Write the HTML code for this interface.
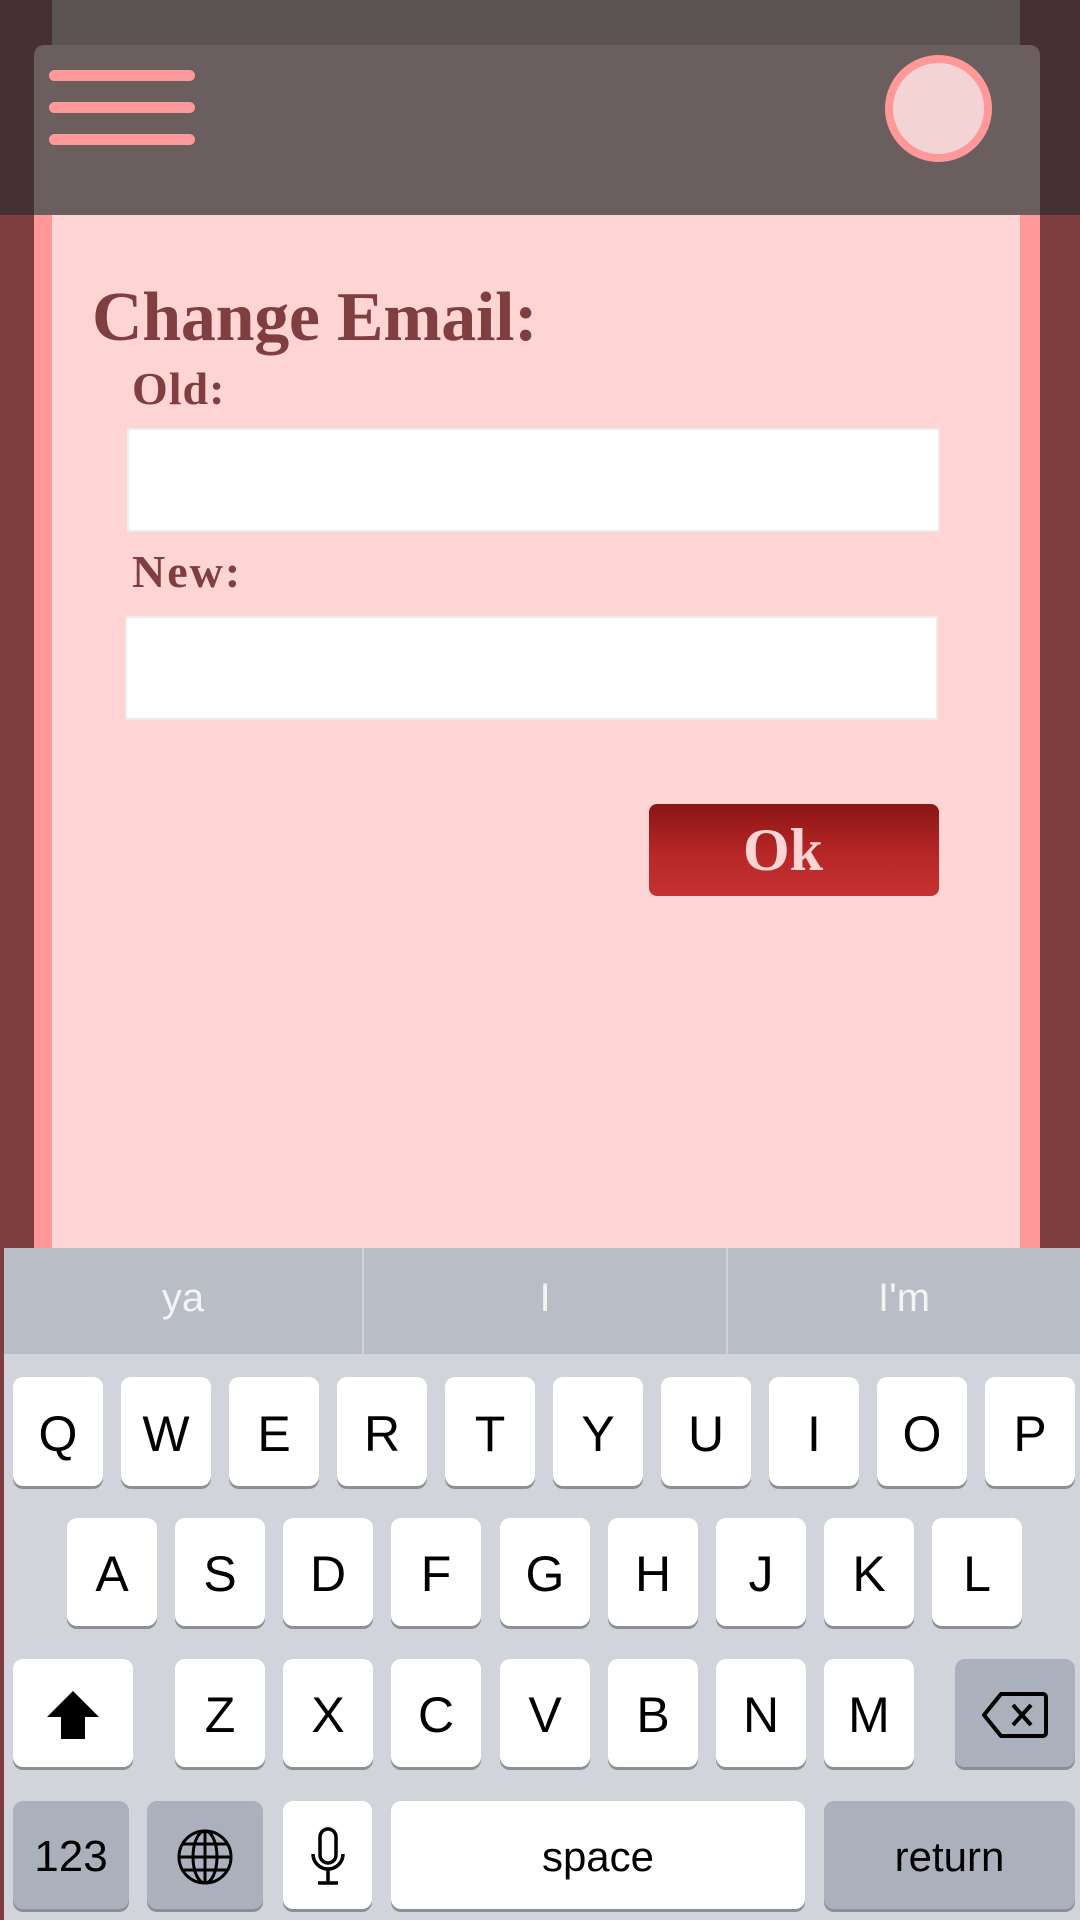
<!DOCTYPE html>
<html><head><meta charset="utf-8">
<style>
*{margin:0;padding:0;box-sizing:border-box}
html,body{width:1080px;height:1920px;overflow:hidden;background:#7d3e3f;position:relative;font-family:"Liberation Sans",sans-serif}
.abs{position:absolute}
.serif{font-family:"Liberation Serif",serif;font-weight:bold;color:#7f3f40}
.key{position:absolute;background:#fff;border-radius:10px;box-shadow:0 3px 0 #8c8f95;text-align:center;font-size:50px;color:#000;display:flex;align-items:center;justify-content:center;padding-top:4px}
.gk{background:#abb1bc}
</style></head><body>
<div class="abs" style="left:34px;top:0;width:1006px;height:1250px;background:#ff9999"></div>
<div class="abs" style="left:52px;top:0;width:968px;height:1250px;background:#ffd4d4"></div>
<div class="abs" style="left:0;top:0;width:1080px;height:215px;background:#463033"></div>
<div class="abs" style="left:52px;top:0;width:968px;height:215px;background:#5b5252"></div>
<div class="abs" style="left:34px;top:45px;width:1006px;height:170px;background:#6a5e5e;border-radius:10px 10px 0 0"></div>
<div class="abs" style="left:52px;top:45px;width:968px;height:170px;background:#6a5e5e"></div>
<div class="abs" style="left:49px;top:70px;width:146px;height:11px;border-radius:6px;background:#ff9999"></div>
<div class="abs" style="left:49px;top:102px;width:146px;height:11px;border-radius:6px;background:#ff9999"></div>
<div class="abs" style="left:49px;top:134px;width:146px;height:11px;border-radius:6px;background:#ff9999"></div>
<div class="abs" style="left:885px;top:55px;width:107px;height:107px;border-radius:50%;background:#f3d3d3;border:8px solid #ff9999"></div>
<div class="abs serif" style="left:92px;top:280px;font-size:70px;line-height:76px;letter-spacing:-0.3px">Change Email:</div>
<div class="abs serif" style="left:132px;top:363px;font-size:46px;line-height:52px;letter-spacing:1px">Old:</div>
<div class="abs" style="left:127px;top:428px;width:813px;height:104px;background:#fff;border:2px solid #ececec"></div>
<div class="abs serif" style="left:132px;top:546px;font-size:46px;line-height:52px;letter-spacing:2px">New:</div>
<div class="abs" style="left:125px;top:616px;width:813px;height:104px;background:#fff;border:2px solid #ececec"></div>
<div class="abs serif" style="left:649px;top:804px;width:290px;height:92px;border-radius:8px;background:linear-gradient(#8b1515,#b72727 55%,#c53232);color:#ffd4d4;font-size:60px;line-height:92px;text-align:center;padding-right:22px">Ok</div>
<div class="abs" style="left:4px;top:1248px;width:1076px;height:672px;background:#d1d4da"></div>
<div class="abs" style="left:4px;top:1248px;width:1076px;height:106px;background:#b9bdc6"></div>
<div class="abs" style="left:362px;top:1248px;width:2px;height:106px;background:#cfd2d8"></div>
<div class="abs" style="left:726px;top:1248px;width:2px;height:106px;background:#cfd2d8"></div>
<div class="abs" style="left:4px;top:1276px;width:358px;text-align:center;font-size:40px;color:#f4f4f6">ya</div>
<div class="abs" style="left:364px;top:1276px;width:362px;text-align:center;font-size:40px;color:#f4f4f6">I</div>
<div class="abs" style="left:728px;top:1276px;width:352px;text-align:center;font-size:40px;color:#f4f4f6">I'm</div>

<div class="key" style="left:13px;top:1377px;width:90px;height:109px">Q</div>
<div class="key" style="left:121px;top:1377px;width:90px;height:109px">W</div>
<div class="key" style="left:229px;top:1377px;width:90px;height:109px">E</div>
<div class="key" style="left:337px;top:1377px;width:90px;height:109px">R</div>
<div class="key" style="left:445px;top:1377px;width:90px;height:109px">T</div>
<div class="key" style="left:553px;top:1377px;width:90px;height:109px">Y</div>
<div class="key" style="left:661px;top:1377px;width:90px;height:109px">U</div>
<div class="key" style="left:769px;top:1377px;width:90px;height:109px">I</div>
<div class="key" style="left:877px;top:1377px;width:90px;height:109px">O</div>
<div class="key" style="left:985px;top:1377px;width:90px;height:109px">P</div>

<div class="key" style="left:67px;top:1518px;width:90px;height:108px">A</div>
<div class="key" style="left:175px;top:1518px;width:90px;height:108px">S</div>
<div class="key" style="left:283px;top:1518px;width:90px;height:108px">D</div>
<div class="key" style="left:391px;top:1518px;width:90px;height:108px">F</div>
<div class="key" style="left:500px;top:1518px;width:90px;height:108px">G</div>
<div class="key" style="left:608px;top:1518px;width:90px;height:108px">H</div>
<div class="key" style="left:716px;top:1518px;width:90px;height:108px">J</div>
<div class="key" style="left:824px;top:1518px;width:90px;height:108px">K</div>
<div class="key" style="left:932px;top:1518px;width:90px;height:108px">L</div>

<div class="key" style="left:13px;top:1659px;width:120px;height:108px"><svg width="56" height="56" viewBox="0 0 56 56"><path d="M28 4 L54 30 L40 30 L40 52 L16 52 L16 30 L2 30 Z" fill="#000"/></svg></div>
<div class="key" style="left:175px;top:1659px;width:90px;height:108px">Z</div>
<div class="key" style="left:283px;top:1659px;width:90px;height:108px">X</div>
<div class="key" style="left:391px;top:1659px;width:90px;height:108px">C</div>
<div class="key" style="left:500px;top:1659px;width:90px;height:108px">V</div>
<div class="key" style="left:608px;top:1659px;width:90px;height:108px">B</div>
<div class="key" style="left:716px;top:1659px;width:90px;height:108px">N</div>
<div class="key" style="left:824px;top:1659px;width:90px;height:108px">M</div>
<div class="key gk" style="left:955px;top:1659px;width:120px;height:108px"><svg width="68" height="50" viewBox="0 0 68 50"><path d="M20 4 H62 a3 3 0 0 1 3 3 V43 a3 3 0 0 1 -3 3 H20 L3 25 Z" fill="none" stroke="#000" stroke-width="4" stroke-linejoin="round"/><path d="M32 15 L50 35 M50 15 L32 35" stroke="#000" stroke-width="4"/></svg></div>

<div class="key gk" style="left:13px;top:1801px;width:116px;height:108px;font-size:44px">123</div>
<div class="key gk" style="left:147px;top:1801px;width:116px;height:108px"><svg width="60" height="60" viewBox="0 0 60 60" fill="none" stroke="#000" stroke-width="3"><circle cx="30" cy="30" r="26"/><ellipse cx="30" cy="30" rx="12" ry="26"/><path d="M30 4 V56 M4 30 H56 M8 17 H52 M8 43 H52"/></svg></div>
<div class="key" style="left:283px;top:1801px;width:89px;height:108px"><svg width="40" height="62" viewBox="0 0 40 62" fill="none" stroke="#000" stroke-width="3.5"><rect x="12" y="3" width="16" height="34" rx="8"/><path d="M5 28 a15 15 0 0 0 30 0 M20 43 V56 M10 57 H30"/></svg></div>
<div class="key" style="left:391px;top:1801px;width:414px;height:108px;font-size:42px">space</div>
<div class="key gk" style="left:824px;top:1801px;width:251px;height:108px;font-size:42px">return</div>
</body></html>
